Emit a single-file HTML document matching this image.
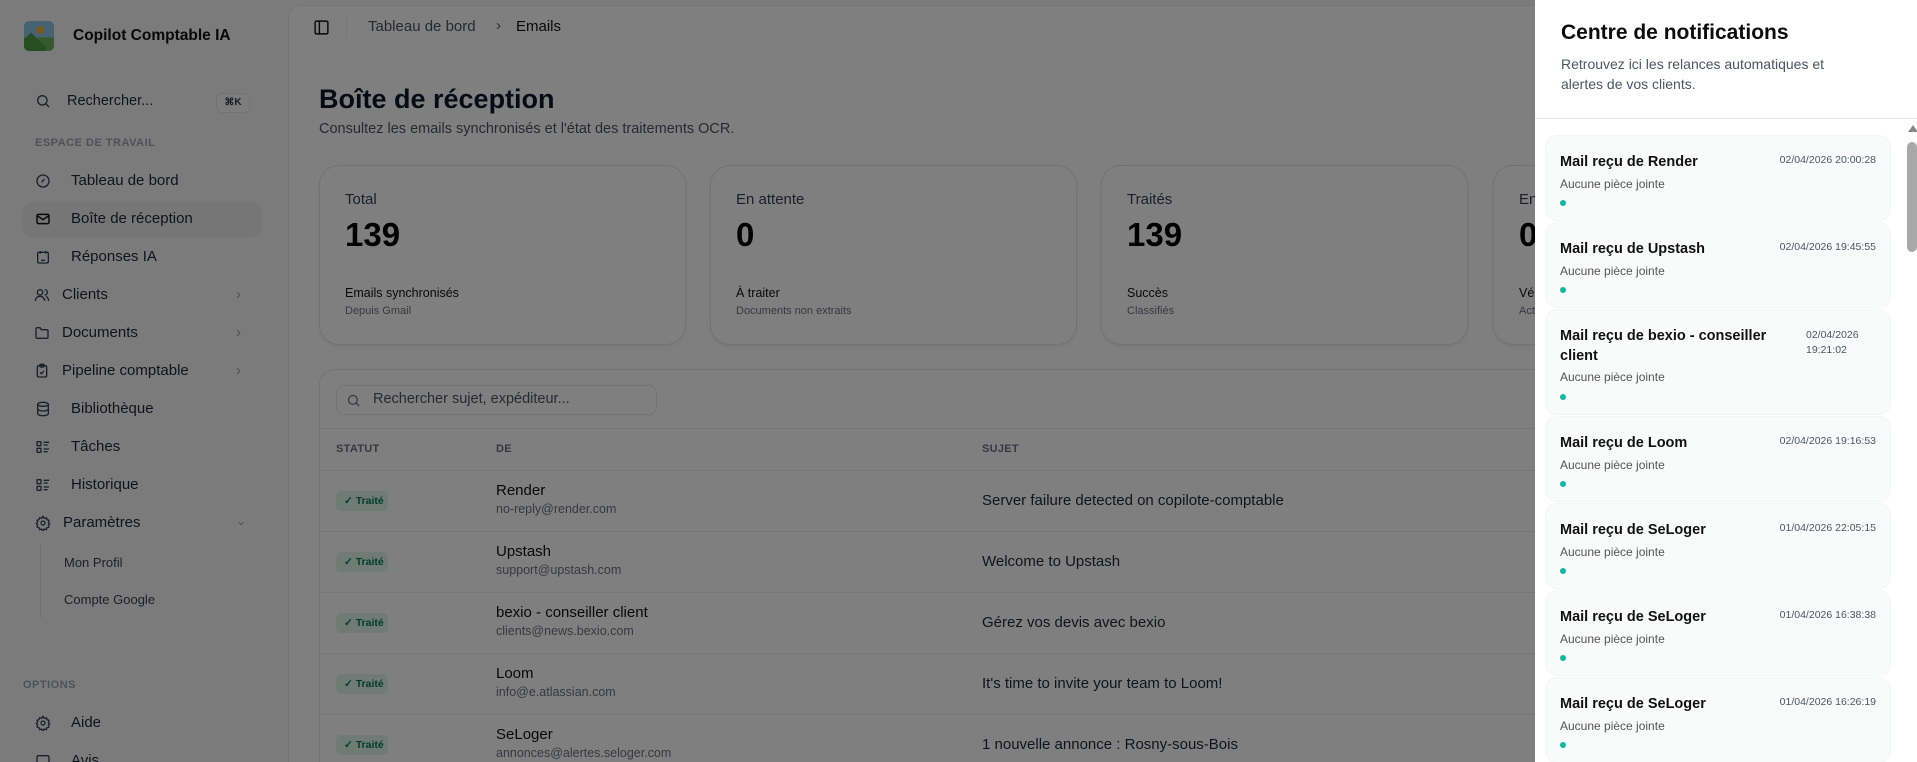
<!DOCTYPE html>
<html><head><meta charset="utf-8"><style>
*{box-sizing:border-box;margin:0;padding:0}
html,body{width:1917px;height:762px;overflow:hidden}
body{position:relative;background:#f6f6f7;font-family:"Liberation Sans",sans-serif;color:#111827}
.a{position:absolute;white-space:nowrap}
.nav{position:absolute;left:34px;font-size:15px;color:#1f2937;display:flex;align-items:center}
.nav svg{width:16px;height:16px;margin-right:18px;flex:none}
.chev{position:absolute;left:236px;color:#9ca3af;font-size:15px}
.main{position:absolute;left:288px;top:5px;width:1700px;height:757px;background:#fff;border-radius:14px 0 0 0;border:1px solid #ececec;border-bottom:none}
.card{position:absolute;top:165px;width:367px;height:180px;border:1px solid #e5e7eb;border-radius:20px;box-shadow:0 2px 4px rgba(0,0,0,.06);background:#fff}
.card .l{position:absolute;left:25px;top:25px;font-size:15px;color:#374151}
.card .n{position:absolute;left:25px;top:50px;font-size:33px;font-weight:bold;color:#000}
.card .s{position:absolute;left:25px;top:120px;font-size:12.5px;color:#111}
.card .t{position:absolute;left:25px;top:139px;font-size:11px;color:#6b7280}
.row{position:absolute;left:319px;width:1300px;height:61px;border-top:1px solid #eceef1}
.badge{position:absolute;left:17px;top:20px;width:52px;height:20px;background:#e3f6ec;border-radius:5px;color:#047857;font-size:10.5px;font-weight:bold;line-height:20px;padding-left:8px}
.nm{position:absolute;left:177px;top:11px;font-size:15px;color:#111}
.em{position:absolute;left:177px;top:31px;font-size:12.5px;color:#6b7280}
.sj{position:absolute;left:663px;top:21px;font-size:15px;color:#1f2937}
.ov{position:absolute;left:0;top:0;width:1535px;height:762px;background:rgba(0,0,0,.5)}
.panel{position:absolute;left:1535px;top:0;width:382px;height:762px;background:#fff;overflow:hidden}
.nc{position:absolute;left:10px;width:346px;background:#f9fbfb;border-radius:12px;border:1px solid #f3f6f6}
.nc .h{position:absolute;left:14px;top:16px;font-size:14.5px;font-weight:bold;color:#111;width:225px;line-height:20px;white-space:normal}
.nc .d{position:absolute;right:14px;top:18px;font-size:10.5px;color:#4b5563}
.nc .p{position:absolute;left:14px;font-size:12px;color:#555}
.nc .o{position:absolute;left:14px;width:6px;height:6px;border-radius:50%;background:#0fb9a4}
</style></head><body>
<div class="a" style="left:24px;top:21px;width:30px;height:30px;border-radius:5px;background:linear-gradient(#8fc4e8 55%,#6fb05a 55%);overflow:hidden"><div style="position:absolute;left:12px;top:5px;width:8px;height:8px;border-radius:50%;background:#f2b53c"></div><div style="position:absolute;left:-4px;top:16px;width:22px;height:22px;background:#4e9b45;transform:rotate(45deg)"></div></div>
<div class="a" style="left:73px;top:27px;font-size:15.5px;font-weight:bold;color:#111">Copilot Comptable IA</div>
<svg class="a" style="left:35px;top:93px" width="16" height="16" viewBox="0 0 24 24" fill="none" stroke="#374151" stroke-width="2"><circle cx="11" cy="11" r="7"/><path d="M21 21l-5-5"/></svg>
<div class="a" style="left:67px;top:93px;font-size:14.5px;color:#1f2937">Rechercher...</div>
<div class="a" style="left:216px;top:93px;width:34px;height:20px;border:1px solid #e5e7eb;border-radius:6px;background:#fafafa;font-size:10px;font-weight:bold;text-align:center;line-height:18px;color:#374151">⌘K</div>
<div class="a" style="left:35px;top:137px;font-size:11px;letter-spacing:.5px;color:#9ca3af;font-weight:bold">ESPACE DE TRAVAIL</div>
<div class="a" style="left:22px;top:202px;width:240px;height:35px;background:#ececee;border-radius:10px"></div>
<div class="nav" style="top:172px;left:35px"><svg viewBox="0 0 24 24" fill="none" stroke="#374151" stroke-width="2"><circle cx="12" cy="12" r="9"/><path d="M10 14l4-5"/></svg><span style="margin-left:2px">Tableau de bord</span></div>
<div class="nav" style="top:210px;left:35px"><svg viewBox="0 0 24 24" fill="none" stroke="#111" stroke-width="2.2"><rect x="3" y="5" width="18" height="14" rx="2"/><path d="M3 7l9 6 9-6"/></svg><span style="margin-left:2px">Boîte de réception</span></div>
<div class="nav" style="top:248px;left:35px"><svg viewBox="0 0 24 24" fill="none" stroke="#374151" stroke-width="2"><rect x="4" y="5" width="16" height="16" rx="2"/><path d="M8 3v4M16 3v4M9 13h.01M15 13h.01M9 17h6"/></svg><span style="margin-left:2px">Réponses IA</span></div>
<div class="nav" style="top:286px"><svg viewBox="0 0 24 24" fill="none" stroke="#374151" stroke-width="2" style="margin-right:12px"><circle cx="9" cy="8" r="4"/><path d="M2 21c0-4 3-7 7-7s7 3 7 7M16 4a4 4 0 010 8M22 21c0-3-2-6-4-7"/></svg>Clients</div><div class="chev a" style="top:286px">›</div>
<div class="nav" style="top:324px"><svg viewBox="0 0 24 24" fill="none" stroke="#374151" stroke-width="2" style="margin-right:12px"><path d="M3 6a2 2 0 012-2h4l2 3h8a2 2 0 012 2v9a2 2 0 01-2 2H5a2 2 0 01-2-2z"/></svg>Documents</div><div class="chev a" style="top:324px">›</div>
<div class="nav" style="top:362px"><svg viewBox="0 0 24 24" fill="none" stroke="#374151" stroke-width="2" style="margin-right:12px"><rect x="5" y="4" width="14" height="17" rx="2"/><rect x="9" y="2" width="6" height="4" rx="1"/><path d="M9 14l2 2 4-4"/></svg>Pipeline comptable</div><div class="chev a" style="top:362px">›</div>
<div class="nav" style="top:400px;left:35px"><svg viewBox="0 0 24 24" fill="none" stroke="#374151" stroke-width="2"><ellipse cx="12" cy="5" rx="8" ry="3"/><path d="M4 5v14c0 1.7 3.6 3 8 3s8-1.3 8-3V5M4 12c0 1.7 3.6 3 8 3s8-1.3 8-3"/></svg><span style="margin-left:2px">Bibliothèque</span></div>
<div class="nav" style="top:438px;left:35px"><svg viewBox="0 0 24 24" fill="none" stroke="#374151" stroke-width="2"><rect x="3" y="4" width="6" height="6" rx="1"/><rect x="3" y="14" width="6" height="6" rx="1"/><path d="M13 5h8M13 9h6M13 15h8M13 19h6"/></svg><span style="margin-left:2px">Tâches</span></div>
<div class="nav" style="top:476px;left:35px"><svg viewBox="0 0 24 24" fill="none" stroke="#374151" stroke-width="2"><rect x="3" y="4" width="6" height="6" rx="1"/><rect x="3" y="14" width="6" height="6" rx="1"/><path d="M13 5h8M13 9h6M13 15h8M13 19h6"/></svg><span style="margin-left:2px">Historique</span></div>
<div class="nav" style="top:514px;left:35px"><svg viewBox="0 0 24 24" fill="none" stroke="#374151" stroke-width="2" style="margin-right:12px"><circle cx="12" cy="12" r="3"/><path d="M12 2l2 3 3-1 1 3 3 1-1 3 2 2-2 2 1 3-3 1-1 3-3-1-2 3-2-3-3 1-1-3-3-1 1-3-2-2 2-2-1-3 3-1 1-3 3 1z"/></svg>Paramètres</div><div class="a" style="left:236px;top:514px;color:#9ca3af;font-size:12px">⌄</div>
<div class="a" style="left:40px;top:545px;width:1px;height:73px;background:#e0e0e0"></div>
<div class="a" style="left:64px;top:555px;font-size:13px;color:#374151">Mon Profil</div>
<div class="a" style="left:64px;top:592px;font-size:13px;color:#374151">Compte Google</div>
<div class="a" style="left:23px;top:679px;font-size:11px;letter-spacing:.5px;color:#9ca3af;font-weight:bold">OPTIONS</div>
<div class="nav" style="top:714px;left:35px"><svg viewBox="0 0 24 24" fill="none" stroke="#374151" stroke-width="2"><circle cx="12" cy="12" r="3"/><path d="M12 2l2 3 3-1 1 3 3 1-1 3 2 2-2 2 1 3-3 1-1 3-3-1-2 3-2-3-3 1-1-3-3-1 1-3-2-2 2-2-1-3 3-1 1-3 3 1z"/></svg><span style="margin-left:2px">Aide</span></div>
<div class="nav" style="top:752px;left:35px"><svg viewBox="0 0 24 24" fill="none" stroke="#374151" stroke-width="2"><rect x="3" y="4" width="18" height="14" rx="2"/></svg><span style="margin-left:2px">Avis</span></div>
<div class="main"></div>
<svg class="a" style="left:313px;top:19px" width="17" height="17" viewBox="0 0 24 24" fill="none" stroke="#111" stroke-width="2"><rect x="3" y="3" width="18" height="18" rx="2"/><path d="M9 3v18"/></svg>
<div class="a" style="left:346px;top:16px;width:1px;height:22px;background:#eee"></div>
<div class="a" style="left:368px;top:18px;font-size:15px;color:#4b5563">Tableau de bord</div>
<div class="a" style="left:496px;top:17px;font-size:15px;color:#4b5563">›</div>
<div class="a" style="left:516px;top:18px;font-size:15px;color:#111">Emails</div>
<div class="a" style="left:319px;top:84px;font-size:27px;font-weight:bold;color:#0f172a">Boîte de réception</div>
<div class="a" style="left:319px;top:121px;font-size:14.5px;color:#4b5563">Consultez les emails synchronisés et l'état des traitements OCR.</div>
<div class="card" style="left:319px"><div class="l">Total</div><div class="n">139</div><div class="s">Emails synchronisés</div><div class="t">Depuis Gmail</div></div>
<div class="card" style="left:710px"><div class="l">En attente</div><div class="n">0</div><div class="s">À traiter</div><div class="t">Documents non extraits</div></div>
<div class="card" style="left:1101px"><div class="l">Traités</div><div class="n">139</div><div class="s">Succès</div><div class="t">Classifiés</div></div>
<div class="card" style="left:1493px"><div class="l">En erreur</div><div class="n">0</div><div class="s">Vérifier</div><div class="t">Action requise</div></div>
<div class="a" style="left:319px;top:369px;width:1300px;height:420px;border:1px solid #e5e7eb;border-radius:16px"></div>
<div class="a" style="left:336px;top:385px;width:321px;height:30px;border:1px solid #e5e7eb;border-radius:8px"></div>
<svg class="a" style="left:346px;top:393px" width="15" height="15" viewBox="0 0 24 24" fill="none" stroke="#6b7280" stroke-width="2"><circle cx="11" cy="11" r="7"/><path d="M21 21l-5-5"/></svg>
<div class="a" style="left:373px;top:391px;font-size:14.5px;color:#4b5563">Rechercher sujet, expéditeur...</div>
<div class="a" style="left:319px;top:428px;width:1300px;height:1px;background:#eceef1"></div>
<div class="a" style="left:336px;top:443px;font-size:11px;font-weight:bold;color:#6b7280;letter-spacing:.3px">STATUT</div>
<div class="a" style="left:496px;top:443px;font-size:11px;font-weight:bold;color:#6b7280;letter-spacing:.3px">DE</div>
<div class="a" style="left:982px;top:443px;font-size:11px;font-weight:bold;color:#6b7280;letter-spacing:.3px">SUJET</div>
<div class="row" style="top:470px"><div class="badge">✓ Traité</div><div class="nm">Render</div><div class="em">no-reply@render.com</div><div class="sj">Server failure detected on copilote-comptable</div></div>
<div class="row" style="top:531px"><div class="badge">✓ Traité</div><div class="nm">Upstash</div><div class="em">support@upstash.com</div><div class="sj">Welcome to Upstash</div></div>
<div class="row" style="top:592px"><div class="badge">✓ Traité</div><div class="nm">bexio - conseiller client</div><div class="em">clients@news.bexio.com</div><div class="sj">Gérez vos devis avec bexio</div></div>
<div class="row" style="top:653px"><div class="badge">✓ Traité</div><div class="nm">Loom</div><div class="em">info@e.atlassian.com</div><div class="sj">It's time to invite your team to Loom!</div></div>
<div class="row" style="top:714px"><div class="badge">✓ Traité</div><div class="nm">SeLoger</div><div class="em">annonces@alertes.seloger.com</div><div class="sj">1 nouvelle annonce : Rosny-sous-Bois</div></div>
<div class="ov"></div>
<div class="panel">
<div class="a" style="left:26px;top:21px;font-size:21px;font-weight:bold;color:#0b0b0b">Centre de notifications</div>
<div class="a" style="left:26px;top:54px;font-size:14px;line-height:20px;color:#4b5563;white-space:normal;width:300px">Retrouvez ici les relances automatiques et alertes de vos clients.</div>
<div class="a" style="left:0;top:118px;width:382px;height:1px;background:#e5e7eb"></div>
<div class="a" style="left:373px;top:125px;width:0;height:0;border-left:5px solid transparent;border-right:5px solid transparent;border-bottom:7px solid #888"></div>
<div class="a" style="left:372px;top:142px;width:10px;height:110px;border-radius:5px;background:#a8a8a8"></div>
<div class="nc" style="top:135px;height:86px"><div class="h">Mail reçu de Render</div><div class="d">02/04/2026 20:00:28</div><div class="p" style="top:41px">Aucune pièce jointe</div><div class="o" style="top:64px"></div></div>
<div class="nc" style="top:222px;height:86px"><div class="h">Mail reçu de Upstash</div><div class="d">02/04/2026 19:45:55</div><div class="p" style="top:41px">Aucune pièce jointe</div><div class="o" style="top:64px"></div></div>
<div class="nc" style="top:309px;height:106px"><div class="h">Mail reçu de bexio - conseiller client</div><div class="d" style="white-space:normal;width:64px;line-height:15px;right:20px">02/04/2026 19:21:02</div><div class="p" style="top:60px">Aucune pièce jointe</div><div class="o" style="top:84px"></div></div>
<div class="nc" style="top:416px;height:86px"><div class="h">Mail reçu de Loom</div><div class="d">02/04/2026 19:16:53</div><div class="p" style="top:41px">Aucune pièce jointe</div><div class="o" style="top:64px"></div></div>
<div class="nc" style="top:503px;height:86px"><div class="h">Mail reçu de SeLoger</div><div class="d">01/04/2026 22:05:15</div><div class="p" style="top:41px">Aucune pièce jointe</div><div class="o" style="top:64px"></div></div>
<div class="nc" style="top:590px;height:86px"><div class="h">Mail reçu de SeLoger</div><div class="d">01/04/2026 16:38:38</div><div class="p" style="top:41px">Aucune pièce jointe</div><div class="o" style="top:64px"></div></div>
<div class="nc" style="top:677px;height:86px"><div class="h">Mail reçu de SeLoger</div><div class="d">01/04/2026 16:26:19</div><div class="p" style="top:41px">Aucune pièce jointe</div><div class="o" style="top:64px"></div></div>
</div>
</body></html>
